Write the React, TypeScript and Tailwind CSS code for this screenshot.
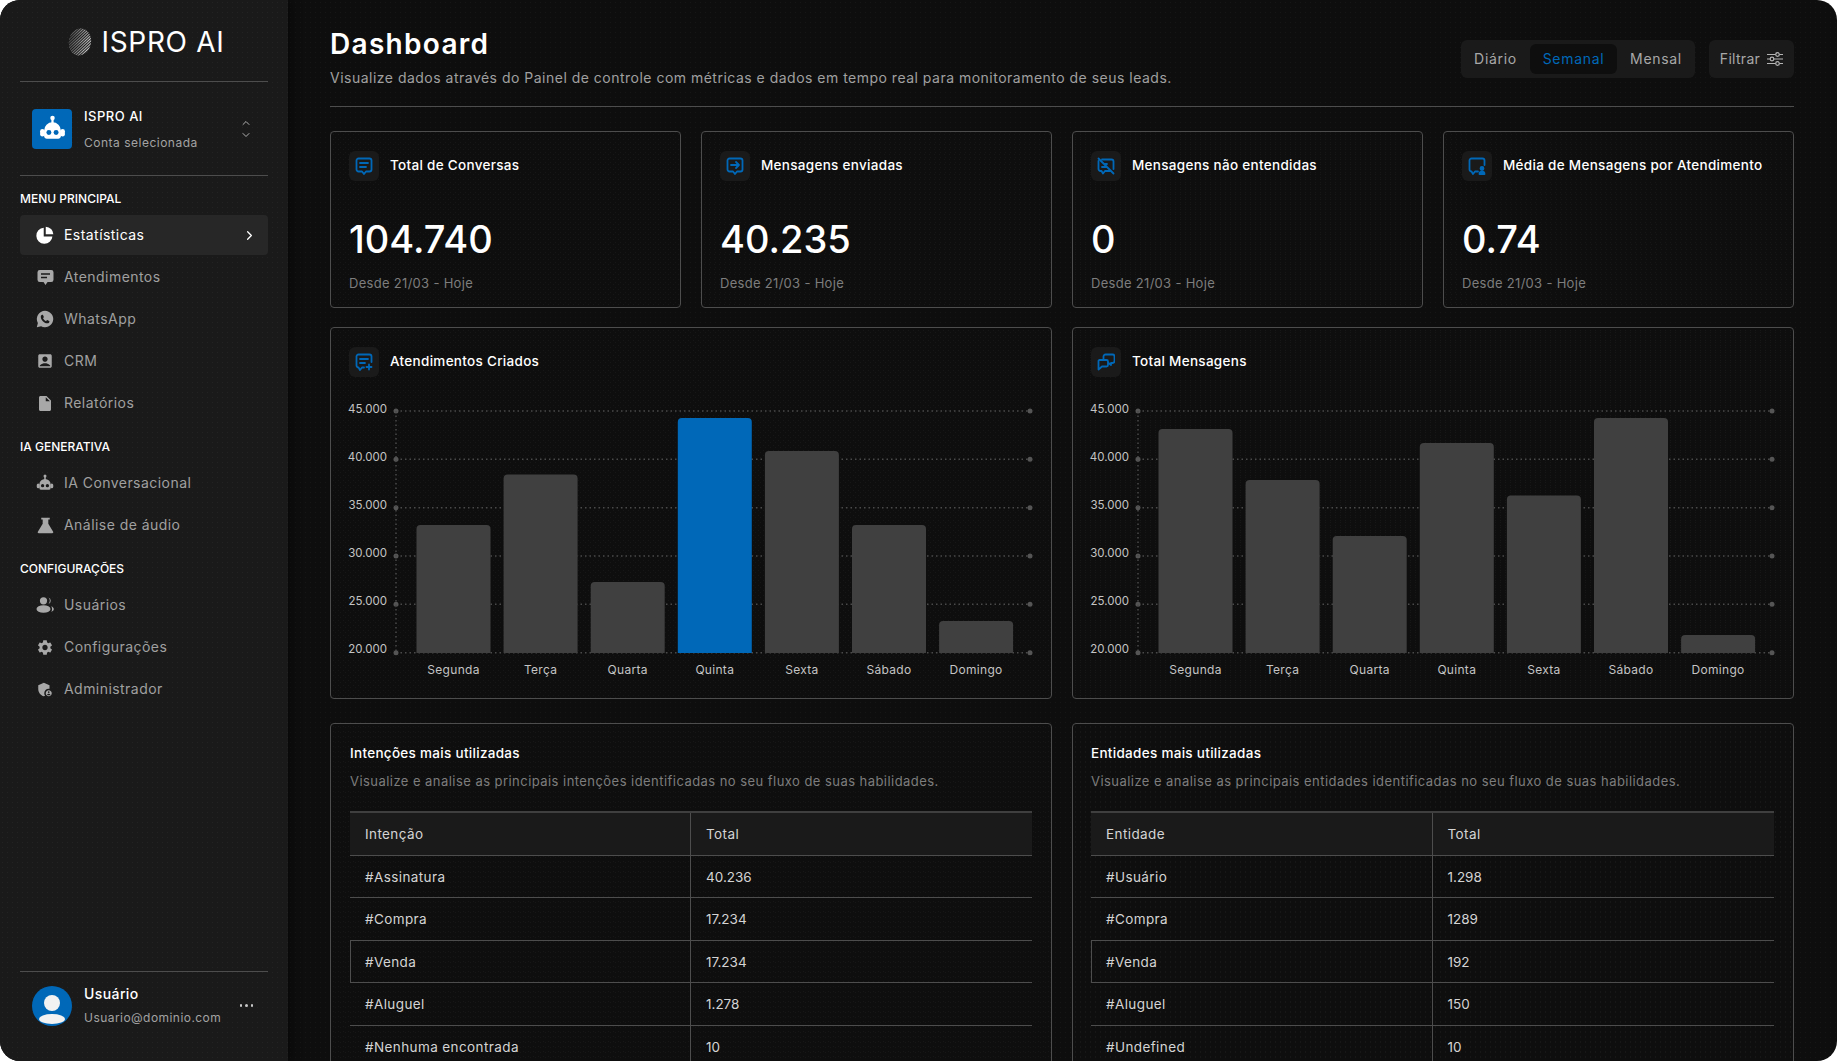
import { ChevronRight, ChevronUp, ChevronDown } from "lucide-react";
import { MdAccountBox, MdAdminPanelSettings, MdInsertDriveFile, MdSettings } from "react-icons/md";
import type { ReactNode } from "react";

const dots =
  "bg-[radial-gradient(rgba(255,255,255,0.04)_0.6px,transparent_0.7px)] bg-[size:5px_5px]";

function PieIcon() {
  return (
    <svg width="18" height="18" viewBox="0 0 17 17" fill="currentColor">
      <path d="M7.3 1.6v8.2h8.2A7.6 7.6 0 1 1 7.3 1.6Z" />
      <path d="M9.2.6a7.4 7.4 0 0 1 7.2 7.3H9.2Z" />
    </svg>
  );
}

function ChatIcon() {
  return (
    <svg width="17" height="17" viewBox="0 0 17 17">
      <path
        fill="currentColor"
        d="M2.800 1h11.400a2.300 2.300 0 0 1 2.300 2.300v7.400a2.300 2.300 0 0 1-2.300 2.300h-3.700L8.500 16l-2-3H2.800A2.300 2.300 0 0 1 .5 10.700V3.300A2.300 2.300 0 0 1 2.800 1Z"
      />
      <path stroke="#1a1a1a" strokeWidth="1.5" d="M4 5h9M4 8.500h6" />
    </svg>
  );
}

function WhatsIcon() {
  return (
    <svg width="18" height="18" viewBox="0 0 18 18">
      <path
        fill="currentColor"
        d="M9 .8a8.200 8.200 0 1 1-3.900 15.400L.8 17.300l1.100-4.200A8.200 8.200 0 0 1 9 .8Z"
      />
      <path
        fill="#1a1a1a"
        d="M6.300 4.800c.4 0 .6.100.8.500l.7 1.500c.1.300 0 .6-.2.800l-.6.700c.7 1.300 1.700 2.200 3 2.900l.8-.9c.2-.2.500-.3.800-.1l1.500.7c.3.200.4.400.3.800-.2 1.100-1.100 1.700-2.200 1.600-3.200-.3-6.200-3.200-6.400-6.400-.1-1.100.5-1.900 1.500-2.100Z"
      />
    </svg>
  );
}

function RobotIcon({ size, eyes }: { size: number; eyes: string }) {
  return (
    <svg width={size} height={size} viewBox="0 0 24 24">
      <g fill="currentColor">
        <circle cx="12" cy="2.600" r="2" />
        <rect x="11" y="4" width="2" height="4" />
        <path d="M4.500 14a7.500 7.500 0 0 1 15 0v4.500a2.500 2.500 0 0 1-2.500 2.500H7a2.500 2.500 0 0 1-2.500-2.500Z" />
        <rect x="1" y="12.500" width="4" height="6.500" rx="2" />
        <rect x="19" y="12.500" width="4" height="6.500" rx="2" />
      </g>
      <circle cx="8.800" cy="15.500" r="2.200" fill={eyes} />
      <circle cx="15.200" cy="15.500" r="2.200" fill={eyes} />
    </svg>
  );
}

function FlaskIcon() {
  return (
    <svg width="17" height="17" viewBox="0 0 20 20" fill="currentColor">
      <path d="M5 1h10v2h-1.700v5L19 17.300a1.200 1.200 0 0 1-1 1.700H2a1.200 1.200 0 0 1-1-1.700L6.700 8V3H5Z" />
    </svg>
  );
}

function UsersIcon() {
  return (
    <svg width="18" height="18" viewBox="0 0 18 18" fill="currentColor">
      <circle cx="7.500" cy="4.800" r="3.600" />
      <ellipse cx="7.500" cy="13" rx="7" ry="3.800" />
      <path d="M12.500 1.600a3.400 3.400 0 0 1 0 6.400 5 5 0 0 0 0-6.400Z" />
      <path d="M15.300 10.200c1.500.5 2.500 1.600 2.500 2.900s-1 2.300-2.500 2.800c1-1.800 1-3.900 0-5.700Z" />
    </svg>
  );
}

const sections = [
  {
    title: "MENU PRINCIPAL",
    items: [
      { label: "Estatísticas", icon: <PieIcon />, active: true },
      { label: "Atendimentos", icon: <ChatIcon /> },
      { label: "WhatsApp", icon: <WhatsIcon /> },
      { label: "CRM", icon: <MdAccountBox size={20} /> },
      { label: "Relatórios", icon: <MdInsertDriveFile size={19} /> },
    ],
  },
  {
    title: "IA GENERATIVA",
    items: [
      { label: "IA Conversacional", icon: <RobotIcon size={18} eyes="#1a1a1a" /> },
      { label: "Análise de áudio", icon: <FlaskIcon /> },
    ],
  },
  {
    title: "CONFIGURAÇÕES",
    items: [
      { label: "Usuários", icon: <UsersIcon /> },
      { label: "Configurações", icon: <MdSettings size={19} /> },
      { label: "Administrador", icon: <MdAdminPanelSettings size={19} /> },
    ],
  },
];

function Sidebar() {
  return (
    <aside
      className={`relative z-10 flex w-[288px] shrink-0 flex-col bg-[#1a1a1a] px-5 shadow-[3px_0_10px_rgba(0,0,0,0.45)] ${dots}`}
    >
      <div className="flex h-[82px] shrink-0 items-center justify-center gap-[9px] border-b border-[#4d4d4d] pt-[2px] pl-[5px]">
        <svg width="24" height="28" viewBox="0 0 24 28">
          <defs>
            <pattern id="logoDots" width="2" height="2" patternUnits="userSpaceOnUse" patternTransform="rotate(35)">
              <rect width="1" height="2" fill="#d4d4d4" />
            </pattern>
            <linearGradient id="logoFade" x1="0" x2="1" y1="0" y2="0">
              <stop offset="0" stopColor="#1a1a1a" stopOpacity="0.75" />
              <stop offset="1" stopColor="#1a1a1a" stopOpacity="0" />
            </linearGradient>
          </defs>
          <ellipse cx="12" cy="14" rx="11" ry="13.500" fill="url(#logoDots)" transform="rotate(12 12 14)" />
          <ellipse cx="12" cy="14" rx="11" ry="13.500" fill="url(#logoFade)" transform="rotate(12 12 14)" />
        </svg>
        <span className="text-[28px] leading-none font-normal tracking-[0.7px] text-white">ISPRO AI</span>
      </div>

      <div className="flex h-[94px] shrink-0 items-center border-b border-[#4d4d4d] px-3">
        <div className="flex h-10 w-10 items-center justify-center rounded bg-[#0068b8] text-white">
          <RobotIcon size={27} eyes="#0068b8" />
        </div>
        <div className="ml-3 flex-1">
          <p className="text-[13px] leading-5 font-medium tracking-[0.5px] text-white">ISPRO AI</p>
          <p className="mt-[9px] text-xs leading-4 tracking-[0.5px] text-[#a3a3a3]">Conta selecionada</p>
        </div>
        <div className="mr-1 flex flex-col items-center text-[#b0b0b0]">
          <ChevronUp size={12} />
          <ChevronDown size={12} />
        </div>
      </div>

      {sections.map((section, i) => (
        <div key={section.title} className={i === 0 ? "mt-[15px]" : "mt-4"}>
          <h3 className="h-4 text-xs leading-4 font-medium tracking-normal text-white">{section.title}</h3>
          <ul className="mt-2 flex flex-col gap-[2px]">
            {section.items.map((item) => (
              <li
                key={item.label}
                className={`flex h-10 items-center rounded px-4 text-sm tracking-[0.45px] ${
                  item.active ? "bg-[#272727] text-white" : "text-[#a0a0a0]"
                }`}
              >
                <span className={`flex w-[18px] justify-center ${item.active ? "text-white" : "text-[#a8a8a8]"}`}>
                  {item.icon}
                </span>
                <span className="ml-[10px] flex-1">{item.label}</span>
                {item.active && <ChevronRight size={15} className="mr-[-5px]" />}
              </li>
            ))}
          </ul>
        </div>
      ))}

      <div className="mt-auto flex h-[90px] shrink-0 border-t border-[#4d4d4d] px-3 pt-[14px]">
        <svg width="40" height="40" viewBox="0 0 40 40" className="shrink-0">
          <defs>
            <clipPath id="avatarClip">
              <circle cx="20" cy="20" r="20" />
            </clipPath>
          </defs>
          <circle cx="20" cy="20" r="20" fill="#0068b8" />
          <g clipPath="url(#avatarClip)" fill="#f2f2f2">
            <circle cx="20" cy="17" r="8" />
            <ellipse cx="20" cy="33" rx="13" ry="5" />
          </g>
        </svg>
        <div className="ml-3 flex-1">
          <p className="-mt-[2px] text-sm leading-5 font-medium tracking-[0.4px] text-white">Usuário</p>
          <p className="mt-[6px] text-xs leading-4 tracking-[0.45px] text-[#a3a3a3]">Usuario@dominio.com</p>
        </div>
        <span className="mt-[18px] mr-[3px] flex gap-[3px]">
          <i className="h-[2.500px] w-[2.500px] rounded-full bg-[#c8c8c8]" />
          <i className="h-[2.500px] w-[2.500px] rounded-full bg-[#c8c8c8]" />
          <i className="h-[2.500px] w-[2.500px] rounded-full bg-[#c8c8c8]" />
        </span>
      </div>
    </aside>
  );
}

function Glyph({ children }: { children: ReactNode }) {
  return (
    <span className="flex h-[30px] w-[30px] shrink-0 items-center justify-center rounded-md bg-[#1a1a1a]">
      <svg
        width="18"
        height="18"
        viewBox="0 0 18 18"
        fill="none"
        stroke="#0068b8"
        strokeWidth="1.8"
        strokeLinecap="round"
        strokeLinejoin="round"
      >
        {children}
      </svg>
    </span>
  );
}

const bubble = "M3.500 1.500h11a2 2 0 0 1 2 2v9a2 2 0 0 1-2 2h-3.500L9 17l-2-2.500H3.500a2 2 0 0 1-2-2v-9a2 2 0 0 1 2-2Z";

const stats: { title: string; value: string; icon: ReactNode }[] = [
  {
    title: "Total de Conversas",
    value: "104.740",
    icon: (
      <>
        <path d={bubble} />
        <path d="M5 6h8M5 10h6" />
      </>
    ),
  },
  {
    title: "Mensagens enviadas",
    value: "40.235",
    icon: (
      <>
        <path d={bubble} />
        <path d="M5 8h8M10 5l3 3-3 3" />
      </>
    ),
  },
  {
    title: "Mensagens não entendidas",
    value: "0",
    icon: (
      <>
        <path d="M5 2.500h9.500a2 2 0 0 1 2 2v7.500M13 14H8l-2 2.500L4.500 14h-1a2 2 0 0 1-2-2V4" />
        <path d="M1.500 1.500l15 15M7 7l3 0M5 10h4" />
      </>
    ),
  },
  {
    title: "Média de Mensagens por Atendimento",
    value: "0.74",
    icon: (
      <>
        <path d="M10 14.500H7L5 17l-1.500-2.500a2 2 0 0 1-2-2v-9a2 2 0 0 1 2-2h11a2 2 0 0 1 2 2V8" />
        <circle cx="14" cy="11.500" r="1.500" fill="#0068b8" />
        <path d="M11.500 17c0-3 5-3 5 0Z" fill="#0068b8" />
      </>
    ),
  },
];

function StatCard({ title, value, icon }: { title: string; value: string; icon: ReactNode }) {
  return (
    <div className={`h-[177px] rounded border border-[#4d4d4d] px-[18px] pt-[19px] ${dots}`}>
      <div className="flex items-center gap-[11px]">
        <Glyph>{icon}</Glyph>
        <span className="pb-[2px] text-[13.500px] font-medium whitespace-nowrap text-white">{title}</span>
      </div>
      <p className="mt-[34px] text-[38px] leading-[48px] font-medium tracking-normal text-white">{value}</p>
      <p className="mt-[10px] text-[13px] leading-5 text-[#7d7d7d]">Desde 21/03 - Hoje</p>
    </div>
  );
}

const days = ["Segunda", "Terça", "Quarta", "Quinta", "Sexta", "Sábado", "Domingo"];
const ticks = ["45.000", "40.000", "35.000", "30.000", "25.000", "20.000"];

function BarChart({ tops, highlight }: { tops: number[]; highlight?: number }) {
  const base = 263;
  return (
    <svg width="684" height="300" viewBox="0 0 684 300" className="mt-[13px] block overflow-visible">
      {ticks.map((t, i) => {
        const y = 21 + i * 48.34;
        return (
          <g key={t}>
            <line x1="47" x2="681" y1={y} y2={y} stroke="#4a4a4a" strokeWidth="1.5" strokeDasharray="1.500 3" />
            <circle cx="47" cy={y} r="2.500" fill="#555" />
            <circle cx="681" cy={y} r="2.500" fill="#555" />
            <text x="38" y={23 + i * 47.9} textAnchor="end" fontSize="11.5" letterSpacing="0" fill="#c4c4c4">
              {t}
            </text>
          </g>
        );
      })}
      <line x1="47" x2="47" y1="21" y2={base} stroke="#4a4a4a" strokeWidth="1.5" strokeDasharray="1.500 3" />
      {days.map((d, i) => {
        const x = 67.5 + i * 87.1;
        const top = tops[i];
        return (
          <g key={d}>
            <path
              d={`M${x} ${base}V${top + 4}a4 4 0 0 1 4-4h66a4 4 0 0 1 4 4V${base}Z`}
              fill={i === highlight ? "#0068b8" : "#404040"}
            />
            <text x={x + 37} y="284" textAnchor="middle" fontSize="12" fill="#c4c4c4">
              {d}
            </text>
          </g>
        );
      })}
    </svg>
  );
}

function ChartCard({ title, icon, children }: { title: string; icon: ReactNode; children: ReactNode }) {
  return (
    <div className={`h-[372px] rounded border border-[#4d4d4d] px-[18px] pt-[19px] ${dots}`}>
      <div className="flex items-center gap-[11px]">
        <Glyph>{icon}</Glyph>
        <span className="pb-[2px] text-[13.500px] font-medium text-white">{title}</span>
      </div>
      {children}
    </div>
  );
}

function DataTable({
  title,
  desc,
  head,
  rows,
  padding,
}: {
  title: string;
  desc: string;
  head: string;
  rows: string[][];
  padding: string;
}) {
  return (
    <div className={`h-[400px] rounded border border-[#4d4d4d] pt-[19px] ${padding} ${dots}`}>
      <h2 className="text-[13.500px] leading-5 font-medium text-white">{title}</h2>
      <p className="mt-2 text-[13px] leading-5 tracking-[0.45px] text-[#7d7d7d]">{desc}</p>
      <div className="mt-5 border-t-2 border-[#3f3f3f] text-[13.500px] tracking-[0.4px] text-[#d4d4d4]">
        <div className="grid h-[42.500px] grid-cols-2 items-center border-b border-[#4d4d4d] bg-[#1a1a1a]">
          <span className="flex h-full items-center border-r border-[#4d4d4d] pt-px pl-[15px]">{head}</span>
          <span className="pt-px pl-[15px]">Total</span>
        </div>
        {rows.map(([name, total], i) => (
          <div
            key={name}
            className={`grid h-[42.500px] grid-cols-2 items-center border-b border-[#4d4d4d] ${
              i === 2 ? "shadow-[inset_1px_0_0_#4d4d4d]" : ""
            }`}
          >
            <span className="flex h-full items-center border-r border-[#4d4d4d] pt-px pl-[15px]">{name}</span>
            <span className="pt-px pl-[15px] tracking-normal">{total}</span>
          </div>
        ))}
      </div>
    </div>
  );
}

export default function App() {
  return (
    <div className="h-screen overflow-hidden bg-white font-[Inter,sans-serif] tracking-[0.3px]">
      <div className="flex h-full overflow-hidden rounded-[20px] bg-[#0e0e0e]">
        <Sidebar />
        <main className={`min-w-0 flex-1 overflow-hidden pr-[43px] pl-[42px] ${dots}`}>
          <header className="flex h-[107px] items-start justify-between border-b border-[#4d4d4d]">
            <div className="pt-[26px]">
              <h1 className="text-[28px] leading-9 font-semibold tracking-[1.3px] text-white">Dashboard</h1>
              <p className="mt-[6px] text-sm leading-5 tracking-[0.49px] text-[#a0a0a0]">
                Visualize dados através do Painel de controle com métricas e dados em tempo real para monitoramento de
                seus leads.
              </p>
            </div>
            <div className="mt-10 flex gap-[14px] text-sm tracking-[0.7px]">
              <div className="flex h-[38px] items-center rounded-md bg-[#1a1a1a] text-[#a8a8a8]">
                <span className="w-[69px] text-center">Diário</span>
                <span className="flex h-[30px] w-[87px] items-center justify-center rounded-md bg-[#0e0e0e] text-[#0068b8]">
                  Semanal
                </span>
                <span className="w-[78px] text-center">Mensal</span>
              </div>
              <div className="flex h-[38px] w-[85px] items-center justify-center gap-[7px] rounded-md bg-[#1a1a1a] tracking-[0.3px] text-[#a8a8a8]">
                Filtrar
                <svg width="16" height="14" viewBox="0 0 16 14" fill="none" stroke="#b4b4b4" strokeWidth="1.200">
                  <path d="M0 2.500h8.500M12.500 2.500H16M0 7h3M7 7h9M0 11.500h8.500M12.500 11.500H16" />
                  <circle cx="10.500" cy="2.500" r="1.800" />
                  <circle cx="5" cy="7" r="1.800" />
                  <circle cx="10.500" cy="11.500" r="1.800" />
                </svg>
              </div>
            </div>
          </header>

          <section className="mt-6 grid grid-cols-4 gap-5">
            {stats.map((s) => (
              <StatCard key={s.title} {...s} />
            ))}
          </section>

          <section className="mt-[19px] grid grid-cols-2 gap-5">
            <ChartCard
              title="Atendimentos Criados"
              icon={
                <>
                  <path d="M9 14.500H7L5 17l-1.500-2.500a2 2 0 0 1-2-2v-9a2 2 0 0 1 2-2h11a2 2 0 0 1 2 2V9" />
                  <path d="M5 6h8M5 10h5M14 11.500v5M11.500 14h5" />
                </>
              }
            >
              <BarChart tops={[135, 84.500, 192, 28, 61, 135, 231]} highlight={3} />
            </ChartCard>
            <ChartCard
              title="Total Mensagens"
              icon={
                <>
                  <path d="M6.500 6V3.500a2 2 0 0 1 2-2h7a2 2 0 0 1 2 2V8a2 2 0 0 1-2 2H14v2l-2.500-2" />
                  <path d="M2.500 7h7a1.500 1.500 0 0 1 1.500 1.500V12a1.500 1.500 0 0 1-1.500 1.500H5L1.500 16.500V8A1 1 0 0 1 2.500 7Z" />
                </>
              }
            >
              <BarChart tops={[39, 90, 146, 53, 105.500, 28, 245]} />
            </ChartCard>
          </section>

          <section className="mt-6 grid grid-cols-2 gap-5">
            <DataTable
              title="Intenções mais utilizadas"
              desc="Visualize e analise as principais intenções identificadas no seu fluxo de suas habilidades."
              head="Intenção"
              padding="px-[19px]"
              rows={[
                ["#Assinatura", "40.236"],
                ["#Compra", "17.234"],
                ["#Venda", "17.234"],
                ["#Aluguel", "1.278"],
                ["#Nenhuma encontrada", "10"],
              ]}
            />
            <DataTable
              title="Entidades mais utilizadas"
              desc="Visualize e analise as principais entidades identificadas no seu fluxo de suas habilidades."
              head="Entidade"
              padding="pr-[19px] pl-[18px]"
              rows={[
                ["#Usuário", "1.298"],
                ["#Compra", "1289"],
                ["#Venda", "192"],
                ["#Aluguel", "150"],
                ["#Undefined", "10"],
              ]}
            />
          </section>
        </main>
      </div>
    </div>
  );
}
